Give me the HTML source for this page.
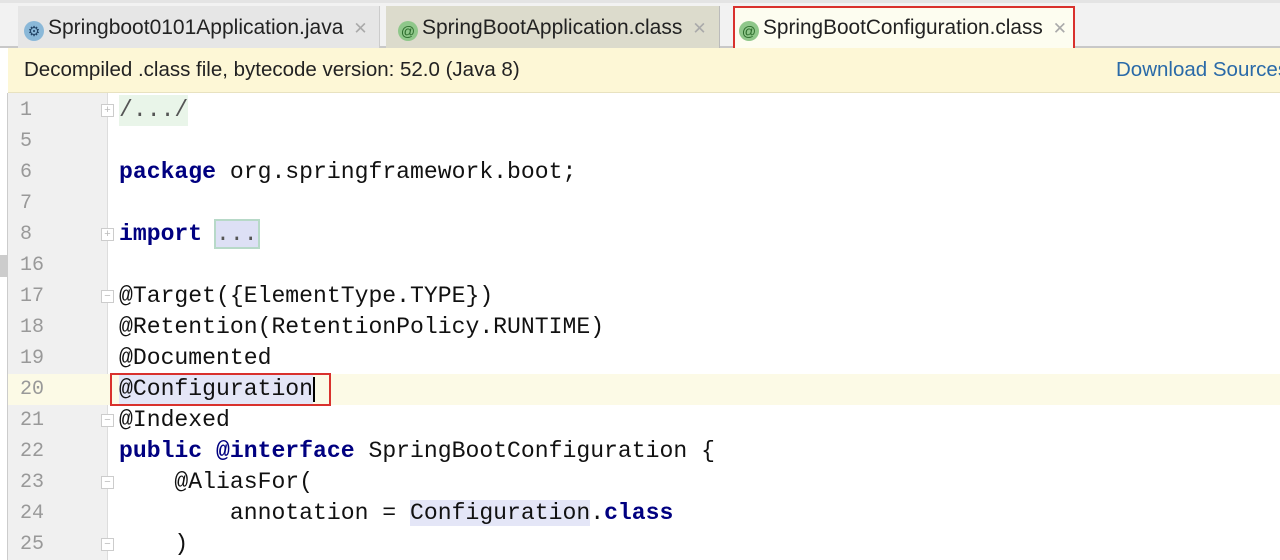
<!DOCTYPE html>
<html><head><meta charset="utf-8"><style>
*{margin:0;padding:0;box-sizing:border-box}
body{width:1280px;height:560px;overflow:hidden;background:#fff;position:relative;font-family:"Liberation Sans",sans-serif}
.tabbar{position:absolute;left:0;top:0;width:1280px;height:48px;background:#f2f2f2;border-top:3px solid #e4e4e4;border-bottom:2px solid #c8c8c8}
.tab{position:absolute;top:3px;height:43px;font-size:21px;color:#222;line-height:43px;white-space:nowrap;overflow:hidden}
.x{color:#aaa;font-size:17px;margin-left:10px}
.ic{display:inline-block;width:20px;height:20px;border-radius:50%;background:#8fc78a;color:#2a6a2a;font-size:14px;text-align:center;line-height:20px;vertical-align:-2px;margin-right:4px}
.info{position:absolute;left:8px;top:48px;width:1272px;height:45px;background:#fdf7d6;border-bottom:1px solid #e8e2c0;font-size:20.5px;color:#222;line-height:43px;padding-left:16px;overflow:hidden;white-space:nowrap}
.info a{position:absolute;left:1108px;top:0;color:#2a6aa8;text-decoration:none}
.lstrip{position:absolute;left:0;top:93px;width:8px;height:467px;background:#fff;border-right:1px solid #ccc}
.gutter{position:absolute;left:8px;top:93px;width:100px;height:467px;background:#f0f0f0;border-right:1px solid #ddd}
.row{position:absolute;left:0;width:1280px;height:31px;font-family:"Liberation Mono",monospace;font-size:23.1px;line-height:31px;white-space:pre}
.num{position:absolute;left:20px;color:#999;font-size:20px}
.code{position:absolute;left:119px;color:#111}
.k{color:#000080;font-weight:bold}
.cur{background:#fcfae6}
.fold{position:absolute;left:101px;top:9px;width:13px;height:13px;border:1px solid #ccc;background:#fff;font-size:11px;line-height:11px;text-align:center;color:#bbb;font-family:"Liberation Sans",sans-serif}
</style></head><body>
<div class="tabbar">
 <div class="tab" style="left:18px;width:362px;background:#e6e6e6;padding-left:6px;border-right:1px solid #ccc"><span class="ic" style="background:#8ab8d8;color:#246">⚙</span>Springboot0101Application.java<span class="x">✕</span></div>
 <div class="tab" style="left:386px;width:334px;background:#dcdbcc;padding-left:12px;border-right:1px solid #bbb"><span class="ic">@</span>SpringBootApplication.class<span class="x">✕</span></div>
 <div class="tab" style="left:733px;width:342px;background:#fdfdf0;padding-left:4px;border:2px solid #d9312d;height:44px;line-height:40px;font-size:20.8px"><span class="ic">@</span>SpringBootConfiguration.class<span class="x">✕</span></div>
</div>
<div class="info">Decompiled .class file, bytecode version: 52.0 (Java 8)<a>Download Sources</a></div>
<div class="lstrip"></div>
<div style="position:absolute;left:0;top:255px;width:8px;height:22px;background:#ccc"></div>
<div class="gutter"></div>

<div class="row" style="top:95px"><span class="num">1</span><span class="fold">+</span><span class="code" style="background:#e9f5e9;color:#555">/.../</span></div>
<div class="row" style="top:126px"><span class="num">5</span></div>
<div class="row" style="top:157px"><span class="num">6</span><span class="code"><span class="k">package</span> org.springframework.boot;</span></div>
<div class="row" style="top:188px"><span class="num">7</span></div>
<div class="row" style="top:219px"><span class="num">8</span><span class="fold">+</span><span class="code"><span class="k">import</span> <span style="background:#dde0f5;outline:2px solid #b7d9c8;color:#555">...</span></span></div>
<div class="row" style="top:250px"><span class="num">16</span></div>
<div class="row" style="top:281px"><span class="num">17</span><span class="fold">−</span><span class="code">@Target({ElementType.TYPE})</span></div>
<div class="row" style="top:312px"><span class="num">18</span><span class="code">@Retention(RetentionPolicy.RUNTIME)</span></div>
<div class="row" style="top:343px"><span class="num">19</span><span class="code">@Documented</span></div>
<div class="row cur" style="top:374px;left:8px"><span class="num" style="left:12px">20</span><span class="code" style="left:111px;background:#e4e6f7">@Configuration</span><span style="position:absolute;left:102px;top:-1px;width:221px;height:33px;border:2px solid #d9312d"></span><span style="position:absolute;left:305px;top:3px;width:2px;height:25px;background:#000"></span></div>
<div class="row" style="top:405px"><span class="num">21</span><span class="fold">−</span><span class="code">@Indexed</span></div>
<div class="row" style="top:436px"><span class="num">22</span><span class="code"><span class="k">public</span> <span class="k">@interface</span> SpringBootConfiguration {</span></div>
<div class="row" style="top:467px"><span class="num">23</span><span class="fold">−</span><span class="code">    @AliasFor(</span></div>
<div class="row" style="top:498px"><span class="num">24</span><span class="code">        annotation = <span style="background:#e4e6f7">Configuration</span>.<span class="k">class</span></span></div>
<div class="row" style="top:529px"><span class="num">25</span><span class="fold">−</span><span class="code">    )</span></div>
</body></html>
